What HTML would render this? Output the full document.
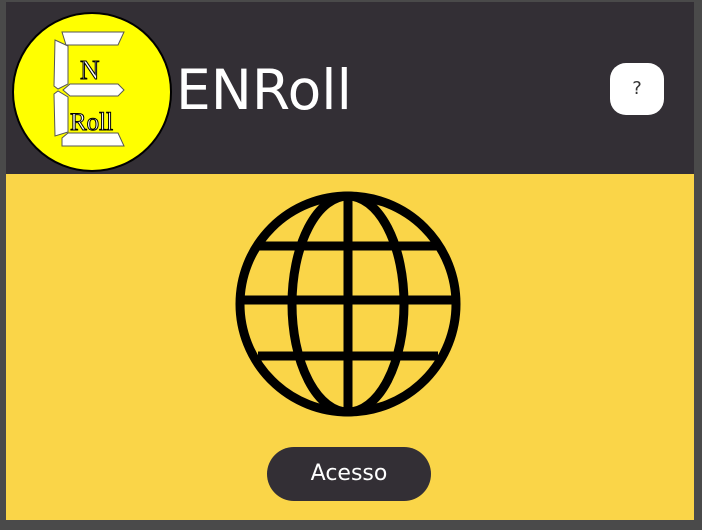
<html><body style="margin:0;width:702px;height:530px;background:#4a4a4a;position:relative;overflow:hidden;font-family:'DejaVu Sans','Liberation Sans',sans-serif">
<div style="position:absolute;left:6px;top:2px;width:688px;height:172px;background:#332f35"></div>
<div style="position:absolute;left:6px;top:174px;width:688px;height:346px;background:#fad548"></div>
<svg style="position:absolute;left:0;top:0" width="702" height="530">
<circle cx="92" cy="92" r="79" fill="#ffff00" stroke="#000" stroke-width="2"/>
<g fill="#fff" stroke="#555" stroke-width="1">
<path d="M62 32 H124 L118 45 H66 Z"/>
<path d="M55 40 L68 46 V84 L58 89 L54 86 Z"/>
<path d="M63 90 L70 84 H118 L124 90 L118 96 H70 Z"/>
<path d="M54 94 L58 91 L68 97 V132 L55 136 Z"/>
<path d="M62 138 L68 133 H118 L124 146 H62 Z"/>
</g>
<text x="80" y="79" font-family="Liberation Serif" font-size="27" fill="#fff" stroke="#000" stroke-width="1">N</text>
<text x="70" y="130" font-family="Liberation Serif" font-size="25" fill="#fff" stroke="#000" stroke-width="1">Roll</text>
<g fill="none" stroke="#000" stroke-width="9">
<circle cx="348" cy="304" r="108"/>
<ellipse cx="348" cy="304" rx="56" ry="108"/>
<line x1="348" y1="196" x2="348" y2="412"/>
<line x1="240" y1="300" x2="456" y2="300"/>
<line x1="258" y1="246" x2="438" y2="246"/>
<line x1="258" y1="356" x2="438" y2="356"/>
</g>
</svg>
<div style="position:absolute;left:176px;top:54px;color:#fff;font-size:55px;line-height:72px">ENRoll</div>
<div style="position:absolute;left:610px;top:63px;width:54px;height:52px;border-radius:16px;background:#fff;color:#333;font-size:18px;text-align:center;line-height:52px">?</div>
<div style="position:absolute;left:267px;top:447px;width:164px;height:54px;border-radius:27px;background:#332f35;color:#fff;font-size:22px;text-align:center;line-height:54px">Acesso</div>
</body></html>
